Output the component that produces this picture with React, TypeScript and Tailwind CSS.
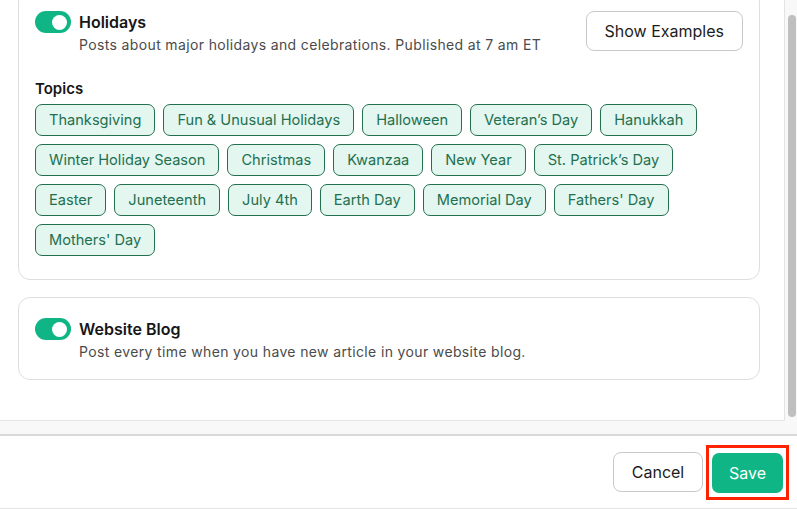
import * as React from "react";

const TOPIC_ROWS: string[][] = [
  ["Thanksgiving", "Fun & Unusual Holidays", "Halloween", "Veteran’s Day", "Hanukkah"],
  ["Winter Holiday Season", "Christmas", "Kwanzaa", "New Year", "St. Patrick’s Day"],
  ["Easter", "Juneteenth", "July 4th", "Earth Day", "Memorial Day", "Fathers' Day"],
  ["Mothers' Day"],
];

function Toggle(): React.ReactElement {
  return (
    <div className="flex h-[22px] w-[36px] shrink-0 items-center justify-end rounded-full bg-[#0fb584] pr-[4px]">
      <div className="size-[15px] rounded-full bg-white" />
    </div>
  );
}

function Chip({ label }: { label: string }): React.ReactElement {
  return (
    <span className="flex h-[32px] items-center rounded-[7px] border border-[#23704f] bg-[#e3f6f0] px-[13px] pt-[2px] text-[14.6px] text-[#22704f]">
      {label}
    </span>
  );
}

function SectionHeader({ title, description }: { title: string; description: string }): React.ReactElement {
  return (
    <div className="flex gap-2">
      <Toggle />
      <div className="flex flex-col">
        <span className="text-[16px] font-semibold leading-[22px] text-[#161616]">{title}</span>
        <span className="mt-[2px] text-[14px] leading-[20px] tracking-[0.36px] text-[#4b4b4b]">{description}</span>
      </div>
    </div>
  );
}

export default function App(): React.ReactElement {
  return (
    <div className="flex h-[510px] w-[797px] flex-col overflow-hidden bg-white font-['Inter',sans-serif]">
      {/* Scroll frame */}
      <div className="flex h-[434px] shrink-0 flex-col bg-[#f8f8f8]">
        <div className="flex h-[421px] shrink-0">
          <div className="min-w-0 flex-1 overflow-hidden border-r border-b border-[#e3e3e3] bg-white pl-[18px] pr-[24px]">
            {/* Holidays */}
            <div className="-mt-[10px] rounded-[12px] border border-[#dedede] px-[16px] pt-[20px] pb-[23px]">
              <div className="flex items-start justify-between">
                <SectionHeader
                  title="Holidays"
                  description="Posts about major holidays and celebrations. Published at 7 am ET"
                />
                <button
                  type="button"
                  className="h-[40px] rounded-[8px] border border-[#c9c9cc] px-[18px] text-[16px] text-[#1c1c1c]"
                >
                  Show Examples
                </button>
              </div>
              <div className="mt-[24px] text-[15px] font-semibold leading-[20px] text-[#161616]">Topics</div>
              <div className="mt-[5px] flex flex-col gap-2">
                {TOPIC_ROWS.map((row, i) => (
                  <div key={i} className="flex gap-2">
                    {row.map((t) => (
                      <Chip key={t} label={t} />
                    ))}
                  </div>
                ))}
              </div>
            </div>

            {/* Website Blog */}
            <div className="mt-[17px] rounded-[12px] border border-[#dedede] px-[16px] pt-[20px] pb-[17px]">
              <SectionHeader
                title="Website Blog"
                description="Post every time when you have new article in your website blog."
              />
            </div>
          </div>
          {/* vertical scrollbar */}
          <div className="flex w-[12px] shrink-0 pl-[3px] pr-[1px] pt-[15px] pb-[4px]">
            <div className="flex-1 rounded-full bg-[#bfbfbf]" />
          </div>
        </div>
      </div>

      {/* Footer */}
      <div className="flex h-[75px] shrink-0 items-center justify-end gap-[3px] border-t-2 border-b border-t-[#d9d9d9] border-b-[#e6e6e6] pr-[8px]">
        <button
          type="button"
          className="h-[40px] w-[90px] rounded-[8px] border border-[#c9c9cc] text-[16px] text-[#1c1c1c]"
        >
          Cancel
        </button>
        <div className="border-[3px] border-[#ff2200] pt-[5px] pb-[4px] pl-[3px] pr-[3px]">
          <button type="button" className="h-[40px] w-[71px] rounded-[7px] bg-[#0fb584] text-[16px] text-white">
            Save
          </button>
        </div>
      </div>
    </div>
  );
}
